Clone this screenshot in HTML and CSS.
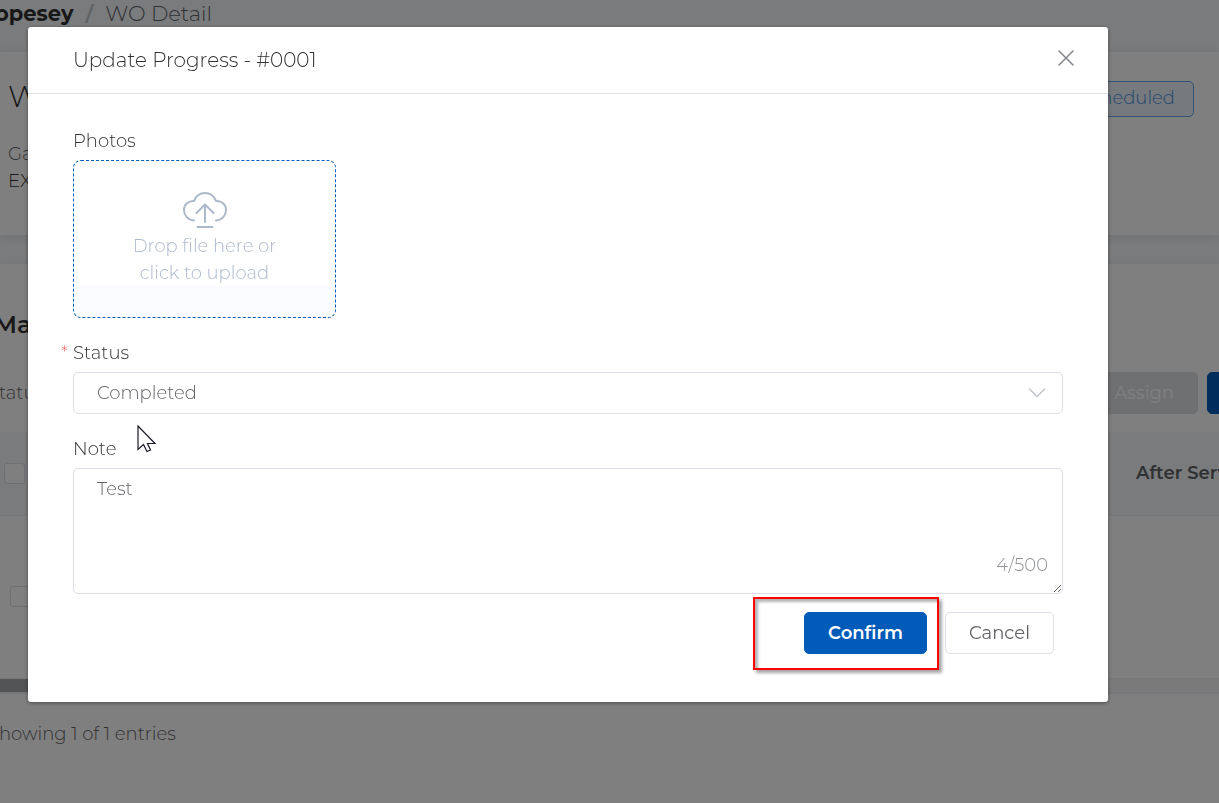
FILE: index.html
```
<!DOCTYPE html>
<html lang="en">
<head>
<meta charset="utf-8">
<meta name="viewport" content="width=device-width, initial-scale=1">
<title>WO Detail</title>
<link rel="stylesheet" href="styles.css">
</head>
<body>
<div class="page">
  <nav class="breadcrumb" aria-label="Breadcrumb">
    <strong class="crumb-parent">opesey</strong>
    <span class="crumb-separator">/</span>
    <span>WO Detail</span>
  </nav>
  <section class="card summary">
    <div class="summary-text">
      <h1 class="summary-title">W</h1>
      <p class="summary-label">Ga</p>
      <p class="summary-value">EX</p>
    </div>
    <span class="tag">Scheduled</span>
  </section>
  <main class="card listing">
    <h2 class="listing-title">Ma</h2>
    <div class="toolbar">
      <span class="toolbar-label">Status</span>
      <div class="toolbar-actions">
        <button class="button button-disabled" type="button" disabled>Assign</button>
        <button class="button button-primary button-edge" type="button" aria-label="Add"></button>
      </div>
    </div>
    <table class="table">
      <thead>
        <tr>
          <th class="cell-check"><input class="check" type="checkbox" aria-label="Select all"></th>
          <th></th>
          <th class="cell-after">After Service</th>
        </tr>
      </thead>
      <tbody>
        <tr>
          <td class="cell-check cell-indent"><input class="check" type="checkbox" aria-label="Select row"></td>
          <td></td>
          <td></td>
        </tr>
      </tbody>
    </table>
    <div class="scroll-track"><div class="scroll-thumb"></div></div>
    <p class="entries">Showing 1 of 1 entries</p>
  </main>
</div>

<div class="overlay">
  <form class="modal" role="dialog" aria-labelledby="dialog-title">
    <header class="modal-header">
      <h2 class="modal-title" id="dialog-title">Update Progress - #0001</h2>
      <button class="close" type="button" aria-label="Close">
        <svg width="16" height="16" viewBox="0 0 16 16" fill="none" stroke="#85878c" stroke-width="1.5" stroke-linecap="round"><path d="M1 1L15 15M15 1L1 15"/></svg>
      </button>
    </header>
    <div class="modal-body">
      <span class="label" id="photos-label">Photos</span>
      <button class="upload" type="button" aria-describedby="photos-label">
        <svg width="44" height="36" viewBox="0 0 44 36" fill="none" stroke="#adb9ca" stroke-width="2" stroke-linecap="round" stroke-linejoin="round">
          <path d="M11 28.500C5 28 1 23.500 1 18C1 12.500 5.500 8.500 11 9C13 4 17 1 22 1C27 1 31 4 33 9C38.500 8.500 43 12.500 43 18C43 23.500 39 28 33 28.500"/>
          <path d="M22 30V12.500M13.500 21L22 12.500L30.500 21M14.500 35H29.500"/>
        </svg>
        <span>Drop file here or<br>click to upload</span>
      </button>

      <label class="label label-required" for="status">Status</label>
      <div class="select-wrap">
        <select class="control select" id="status"><option>Completed</option></select>
        <svg class="chevron" width="18" height="10" viewBox="0 0 18 10" fill="none" stroke="#c0c4cc" stroke-width="1.500" stroke-linecap="round" stroke-linejoin="round"><path d="M1.500 1L9 8.500L16.500 1"/></svg>
      </div>

      <label class="label" for="note">Note</label>
      <div class="note-wrap">
        <textarea class="control note" id="note" maxlength="500">Test</textarea>
        <span class="counter">4/500</span>
      </div>

      <div class="actions">
        <div class="confirm-wrap">
          <button class="button button-primary" type="submit">Confirm</button>
          <span class="highlight"></span>
        </div>
        <button class="button button-plain" type="button">Cancel</button>
      </div>
    </div>
    <svg class="pointer" width="20" height="28" viewBox="0 0 20 28" fill="#fff" stroke="#1c1828" stroke-width="1.200" stroke-linejoin="miter"><path d="M1 1V24.500L6.500 19.500L10 26.500L13.500 25L10.500 18.500H18Z"/></svg>
  </form>
</div>
</body>
</html>
```
FILE: styles.css
```
* {
  box-sizing: border-box;
}

body {
  margin: 0;
  height: 100vh;
  overflow: hidden;
  background: #fff;
  color: #606266;
  font-family: Montserrat, Inter, sans-serif;
  font-size: 18px;
  font-weight: 300;
  line-height: 27px;
}

h1,
h2,
p {
  margin: 0;
  font-weight: 300;
}

button,
select,
textarea {
  font: inherit;
}

.page {
  min-height: 100vh;
  background: #f5f7fa;
}

.breadcrumb {
  display: flex;
  gap: 12px;
  height: 52px;
  margin-left: -5px;
  font-size: 21px;
  white-space: nowrap;
}

.crumb-parent {
  color: #303133;
  font-weight: 700;
}

.crumb-separator {
  color: #c0c4cc;
  font-weight: 600;
}

.card {
  background: #fff;
  box-shadow: 0 2px 12px rgba(0, 0, 0, 0.1);
}

.summary {
  display: flex;
  justify-content: space-between;
  align-items: flex-start;
  height: 183px;
  margin-bottom: 29px;
  padding: 29px 25px 0 8px;
}

.summary-title {
  margin-bottom: 28px;
  color: #303133;
  font-size: 30px;
  line-height: 32px;
}

.summary-value {
  color: #303133;
}

.tag {
  padding: 3px 18px 4px;
  border: 1px solid #66a6ec;
  border-radius: 5px;
  background: #ecf3fa;
  color: #4a8fe0;
}

.listing {
  min-height: 100vh;
  padding-top: 46px;
}

.listing-title {
  margin: 0 0 32px -6px;
  color: #303133;
  font-size: 24px;
  font-weight: 600;
  line-height: 30px;
}

.toolbar {
  display: flex;
  justify-content: space-between;
  align-items: center;
  margin-left: -12px;
  margin-bottom: 18px;
}

.toolbar-actions {
  display: flex;
  gap: 9px;
}

.button {
  height: 42px;
  padding: 0 23px;
  border: 1px solid #dcdfe6;
  border-radius: 5px;
  font-weight: 400;
}

.button-primary {
  border-color: #005bb9;
  background: #005bb9;
  color: #fff;
  font-weight: 600;
}

.button-disabled {
  border-color: #dfe1e5;
  background: #dfe1e5;
  color: #fff;
}

.button-edge {
  width: 60px;
  margin-right: -48px;
}

.button-plain {
  background: #fff;
  color: #606266;
}

.table {
  width: 100%;
  border-collapse: collapse;
  table-layout: fixed;
}

.table th {
  height: 83px;
  padding: 0;
  border-bottom: 1px solid #ebeef5;
  background: #f5f7fa;
  text-align: left;
  white-space: nowrap;
  font-weight: 600;
}

.table td {
  height: 163px;
  padding: 0;
  border-bottom: 1px solid #ebeef5;
}

.table .cell-check {
  width: 36px;
  padding-left: 4px;
}

.table .cell-indent {
  padding-left: 10px;
}

.cell-after {
  width: 83px;
}

.check {
  display: block;
  width: 21px;
  height: 21px;
  margin: 0;
  appearance: none;
  border: 1px solid #dcdfe6;
  border-radius: 3px;
  background: #fff;
}

.scroll-track {
  height: 15px;
  border-bottom: 2px solid #ebeef5;
  background: #f5f5f5;
}

.scroll-thumb {
  width: 50%;
  height: 13px;
  background: #a6a8ac;
}

.entries {
  margin: 27px 0 0 -12px;
}

.overlay {
  position: fixed;
  inset: 0;
  padding: 27px 111px 27px 28px;
  background: rgba(0, 0, 0, 0.5);
}

.modal {
  position: relative;
  border-radius: 3px;
  background: #fff;
  box-shadow: 0 1px 4px rgba(0, 0, 0, 0.4);
}

.modal-header {
  display: flex;
  justify-content: space-between;
  align-items: center;
  height: 67px;
  padding: 0 34px 0 45px;
  border-bottom: 1px solid #dcdfe6;
}

.modal-title {
  color: #303133;
  font-size: 20px;
}

.close {
  display: flex;
  margin-bottom: 4px;
  padding: 0;
  border: 0;
  background: none;
}

.modal-body {
  padding: 34px 45px 48px;
}

.label {
  display: block;
  position: relative;
  margin-bottom: 5px;
  color: #303133;
}

.label-required::before {
  content: "*";
  position: absolute;
  left: -12px;
  color: #f56c6c;
}

.upload {
  display: flex;
  flex-direction: column;
  align-items: center;
  gap: 5px;
  width: 263px;
  margin-bottom: 22px;
  padding: 31px 20px 30px;
  border: 1px dashed #005bb9;
  border-radius: 8px;
  background: linear-gradient(#fff 80%, #fafcff 80%);
  color: #adb9ca;
}

.control {
  display: block;
  width: 100%;
  border: 1px solid #dcdfe6;
  border-radius: 5px;
  background: #fff;
  color: #606266;
}

.select-wrap,
.note-wrap {
  position: relative;
}

.select {
  height: 42px;
  margin-bottom: 22px;
  padding: 0 23px;
  appearance: none;
}

.chevron {
  position: absolute;
  top: 16px;
  right: 17px;
  pointer-events: none;
}

.note {
  height: 126px;
  padding: 7px 23px;
  resize: vertical;
}

.counter {
  position: absolute;
  right: 15px;
  bottom: 15px;
  color: #909399;
}

.actions {
  display: flex;
  justify-content: flex-end;
  gap: 18px;
  padding: 18px 9px 0;
}

.confirm-wrap {
  position: relative;
}

.highlight {
  position: absolute;
  inset: -15px -12px -16px -51px;
  border: 2px solid #f00;
  box-shadow: 3px 3px 3px rgba(0, 0, 0, 0.35), inset 3px 3px 3px rgba(0, 0, 0, 0.3);
  pointer-events: none;
}

.pointer {
  position: absolute;
  top: 398px;
  left: 109px;
}
```
